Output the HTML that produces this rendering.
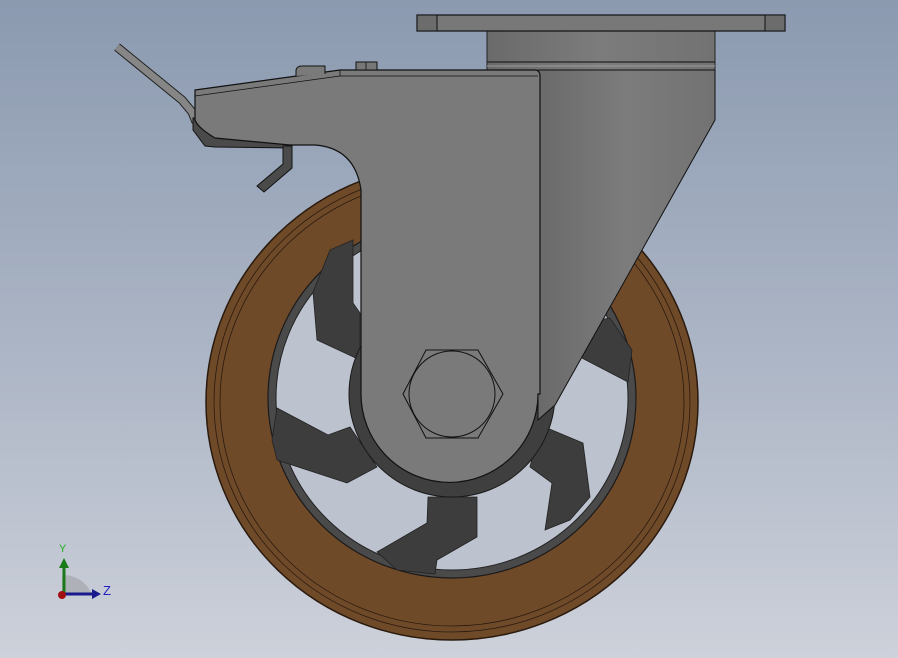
<!DOCTYPE html>
<html><head><style>
html,body{margin:0;padding:0;width:898px;height:658px;overflow:hidden}
svg{display:block}
</style></head><body>
<svg width="898" height="658" viewBox="0 0 898 658" xmlns="http://www.w3.org/2000/svg">
<defs>
<linearGradient id="bg" x1="0" y1="0" x2="0" y2="1">
<stop offset="0" stop-color="#8b9ab0"/><stop offset="0.55" stop-color="#adb6c6"/><stop offset="1" stop-color="#cdd1da"/>
</linearGradient>
<linearGradient id="stem" x1="0" y1="0" x2="1" y2="0">
<stop offset="0" stop-color="#6a6a6a"/><stop offset="0.5" stop-color="#7c7c7c"/><stop offset="1" stop-color="#727272"/>
</linearGradient>
</defs>
<rect width="898" height="658" fill="url(#bg)"/>
<ellipse cx="452" cy="402" rx="246" ry="238" fill="#6f4a29" stroke="#2a1a0e" stroke-width="1.5"/>
<ellipse cx="452" cy="402" rx="238" ry="230" fill="none" stroke="#2a1a0e" stroke-width="0.8"/>
<ellipse cx="452" cy="402" rx="232" ry="224" fill="none" stroke="#2a1a0e" stroke-width="0.8"/>
<ellipse cx="452" cy="398" rx="184" ry="180" fill="#4a4a4a" stroke="#1a1a1a" stroke-width="1.2"/>
<ellipse cx="452" cy="398" rx="176" ry="172" fill="#bcc2ce" stroke="#222" stroke-width="1"/>
<g fill="#3d3d3d" stroke="#222" stroke-width="0.8">
<polygon points="277,408 328,435 350,427 377,467 347,483 292,465 277,460 272,440"/>
<polygon points="428,497 477,497 477,537 437,560 435,574 397,570 377,552 427,523"/>
<polygon points="530,467 540,425 583,443 590,497 570,520 545,530 552,483"/>
<polygon points="580,357 628,382 632,350 610,318 598,320 585,330"/>
<polygon points="313,292 317,340 360,360 360,313 353,303 353,240 330,250"/>
</g>
<circle cx="452" cy="394" r="103" fill="#3f3f3f" stroke="#1a1a1a" stroke-width="1"/>
<rect x="487" y="31" width="228" height="40" fill="url(#stem)" stroke="#222" stroke-width="1"/>
<line x1="487" y1="62" x2="715" y2="62" stroke="#222" stroke-width="1.2"/>
<line x1="487" y1="66" x2="715" y2="66" stroke="#9a9a9a" stroke-width="1"/>
<rect x="417" y="15" width="368" height="16" fill="#787878" stroke="#111" stroke-width="1.2"/>
<rect x="417" y="15" width="20" height="16" fill="#6c6c6c" stroke="#111" stroke-width="1"/>
<rect x="765" y="15" width="20" height="16" fill="#6c6c6c" stroke="#111" stroke-width="1"/>
<polygon points="538,70 715,70 715,120 555,405 538,420" fill="url(#stem)" stroke="#111" stroke-width="1"/>
<polyline points="117,47 182,100 192,112 196,122" fill="none" stroke="#222" stroke-width="9" stroke-linejoin="round"/>
<polyline points="117,47 182,100 192,112 196,122" fill="none" stroke="#868686" stroke-width="7" stroke-linejoin="round"/>
<polygon points="193,118 202,118 212,136 290,145 290,148 215,147 205,146 193,130" fill="#4a4a4a" stroke="#111" stroke-width="1"/>
<polygon points="283,146 292,146 292,168 264,192 257,186 283,164" fill="#4a4a4a" stroke="#111" stroke-width="1"/>
<path d="M195,90 L340,70 L536,70 Q540,71 540,76 L540,394 L538,394 A88,88 0 0 1 361,394 L361,190 Q355,148 315,145 L290,145 L215,138 Q198,128 195,120 Z" fill="#7a7a7a" stroke="#111" stroke-width="1.2"/>
<line x1="195" y1="96" x2="340" y2="76" stroke="#111" stroke-width="0.8"/>
<line x1="340" y1="76" x2="538" y2="76" stroke="#111" stroke-width="0.8"/>
<line x1="340" y1="70" x2="340" y2="76" stroke="#111" stroke-width="0.8"/>
<path d="M296,76 L296,70 Q297,66 302,66 L325,66 L325,74" fill="#7a7a7a" stroke="#111" stroke-width="1"/>
<rect x="356" y="62" width="21" height="8" fill="#777" stroke="#111" stroke-width="1"/>
<line x1="366" y1="62" x2="366" y2="70" stroke="#111" stroke-width="0.8"/>
<polygon points="426,350 478,350 503,394 478,438 426,438 403,394" fill="#7a7a7a" stroke="#111" stroke-width="1"/>
<circle cx="452" cy="394" r="43" fill="#7a7a7a" stroke="#111" stroke-width="1"/>
<path d="M62,595 L62,575 A30,30 0 0 1 92,595 Z" fill="#aeb1b8"/>
<line x1="64" y1="594" x2="64" y2="566" stroke="#1a7a1a" stroke-width="3"/>
<polygon points="59,568 64,558 69,568" fill="#1a7a1a"/>
<line x1="62" y1="594" x2="93" y2="594" stroke="#1a1a8c" stroke-width="3"/>
<polygon points="92,589 101,594 92,599" fill="#1a1a8c"/>
<circle cx="62" cy="595" r="4" fill="#a01010"/>
<text x="59" y="552" font-family="Liberation Sans, sans-serif" font-size="11" fill="#20b020">Y</text>
<text x="103" y="595" font-family="Liberation Sans, sans-serif" font-size="13" fill="#2020c0">Z</text>
</svg>
</body></html>
